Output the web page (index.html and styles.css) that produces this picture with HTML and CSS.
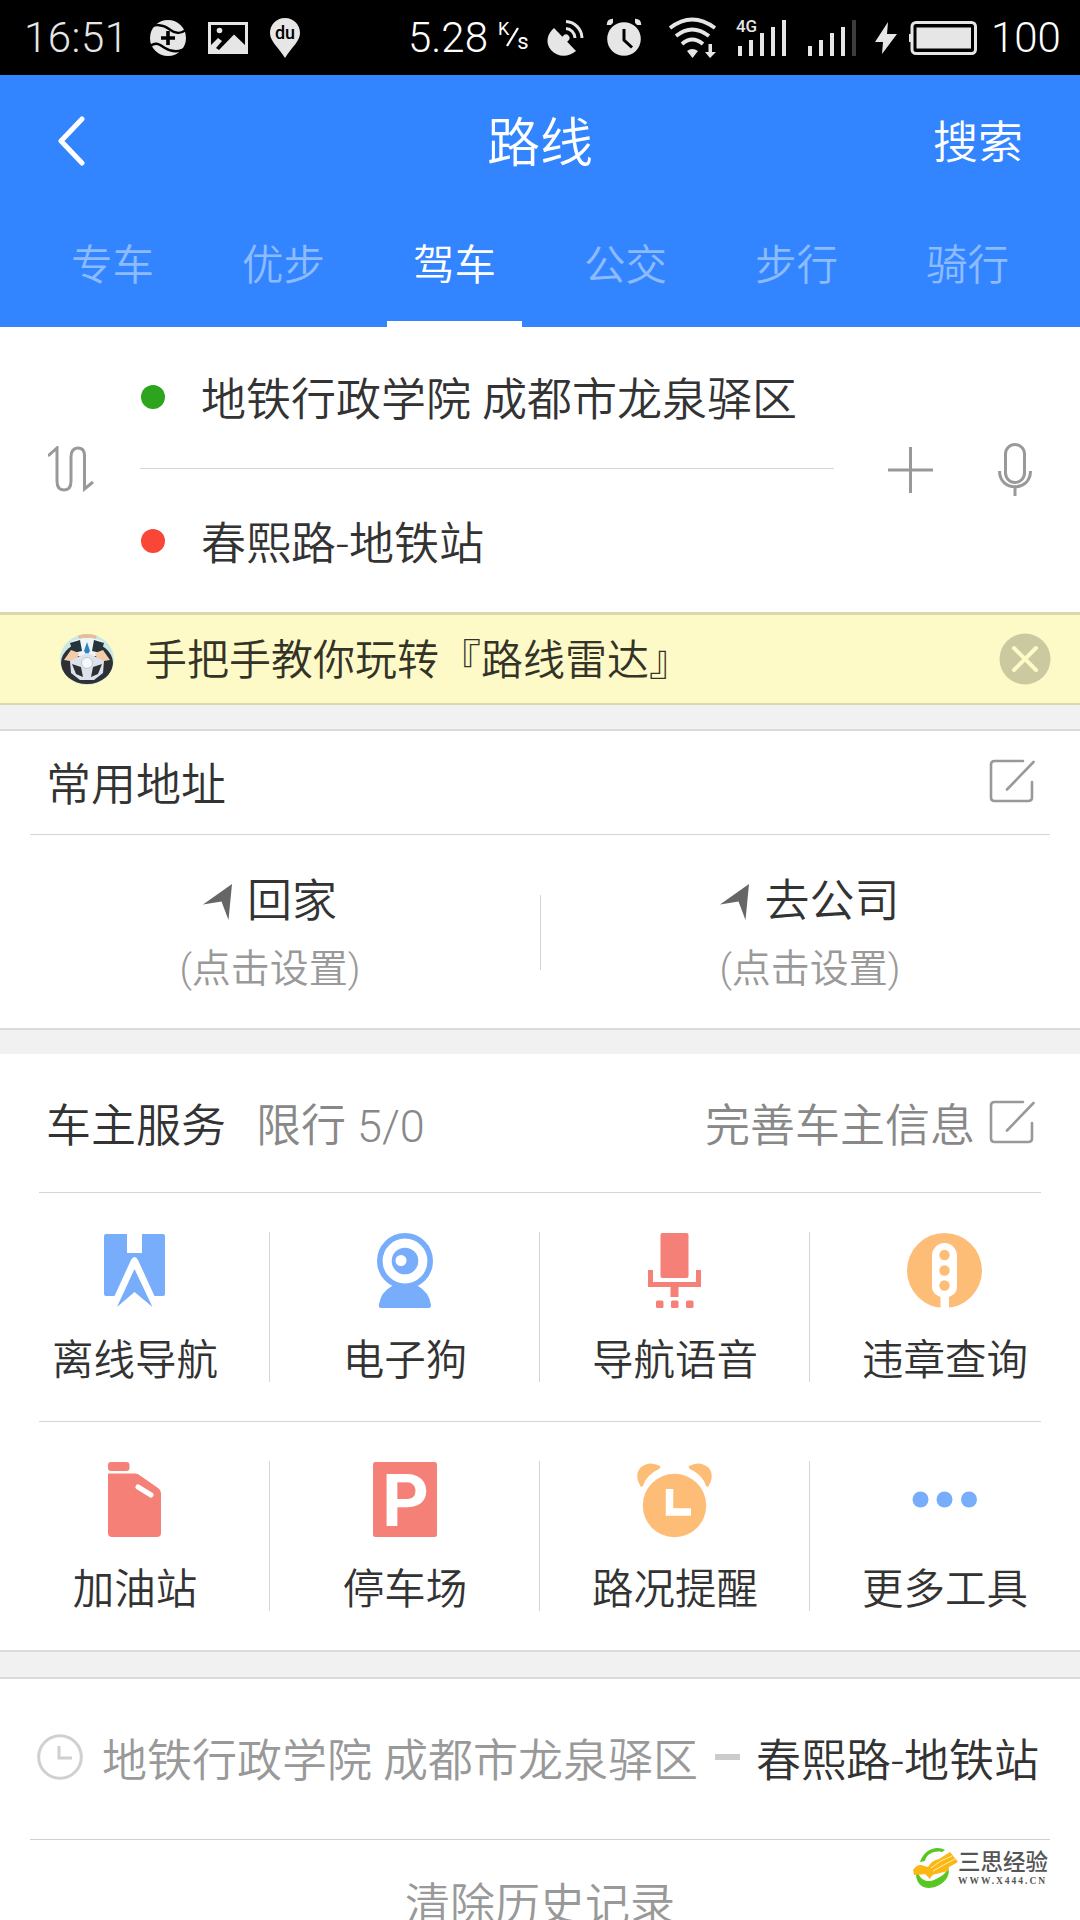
FILE: index.html
```
<!DOCTYPE html>
<html lang="zh-CN">
<head>
<meta charset="utf-8">
<title>路线</title>
<link rel="stylesheet" href="styles.css">
</head>
<body>
<svg class="defs" width="0" height="0" aria-hidden="true">
  <symbol id="edit" viewBox="0 0 46 44">
    <path d="M34 2H5.500Q2 2 2 5.500V38.500Q2 42 5.500 42H39Q43 42 43 38.500V23" />
    <path d="M18 30.500L44.500 3" />
  </symbol>
  <symbol id="arrow" viewBox="0 0 30 36">
    <path d="M29 0L25.500 36L18.500 17.500L0 20.500Z" fill="#666" />
  </symbol>
</svg>
<div class="screen">
  <div class="status">
    <span class="clock">16:51</span>
    <svg class="s-plus" viewBox="0 0 36 36">
      <circle cx="18" cy="18" r="18" fill="#e6e6e6"/>
      <path d="M-1 8.500C4 3 14 5 19 9S31 15 37 8.500M-1 27.500C5 21 9 24 15 28S30 33 37 27" fill="none" stroke="#000" stroke-width="2.400"/>
      <path d="M18 11V25M11 18H25" stroke="#000" stroke-width="3.600"/>
    </svg>
    <svg class="s-photo" viewBox="0 0 40 32">
      <path fill="#e6e6e6" fill-rule="evenodd" d="M0 0H40V32H0ZM3 3V23L10 16L14 19L8 26L11 28L26 12.500L37 23V3Z"/>
      <circle cx="11.500" cy="8.500" r="2.800" fill="#e6e6e6"/>
    </svg>
    <svg class="s-pin" viewBox="0 0 30 40">
      <path fill="#e6e6e6" d="M15 0C6 0 0 7 0 15C0 23 8 29 15 40C22 29 30 23 30 15C30 7 24 0 15 0Z"/>
      <text x="15" y="21" text-anchor="middle" class="pin-text">du</text>
    </svg>
    <span class="speed">5.28</span>
    <span class="unit"><span class="unit-k">K</span><svg viewBox="0 0 14 20"><path d="M1 19L12 1" stroke="#fff" stroke-width="2.200"/></svg><span class="unit-s">s</span></span>
    <svg class="s-dish" viewBox="0 0 36 36">
      <path fill="#e6e6e6" d="M6 8L28 31C20 38 9 37 3 30S-1 14 6 8Z"/>
      <path d="M16 20L18 18" stroke="#e6e6e6" stroke-width="7" stroke-linecap="round"/>
      <path d="M18 1.500A17 17 0 0 1 34 18M18 8.500A10 10 0 0 1 27 18" fill="none" stroke="#e6e6e6" stroke-width="3"/>
    </svg>
    <svg class="s-alarm" viewBox="0 0 34 37">
      <circle cx="17" cy="20" r="16.800" fill="#e6e6e6"/>
      <path d="M2 6Q2 2 6 2M28 2Q32 2 32 6" fill="none" stroke="#e6e6e6" stroke-width="4.500"/>
      <path d="M17 10V21L25 28.500" fill="none" stroke="#000" stroke-width="3"/>
    </svg>
    <svg class="s-wifi" viewBox="0 0 48 40">
      <path d="M1 10Q23 -7 46 10M7 18Q23 5 40 18M13 26Q23 17 34 26" fill="none" stroke="#e6e6e6" stroke-width="3.800"/>
      <path fill="#e6e6e6" d="M18 33Q23 29 29 33L23.500 40ZM39.500 26H43V34H47L41 40L36 34H39.500Z"/>
    </svg>
    <svg class="s-signal" viewBox="0 0 50 38">
      <text x="-2" y="13" class="net" textLength="21">4G</text>
      <path d="M2 27V37M13 21V37M24 14V37M35 8V37M46 1V37" stroke="#e6e6e6" stroke-width="4"/>
    </svg>
    <svg class="s-signal2" viewBox="0 0 50 38">
      <path d="M2 27V37M13 21V37M24 14V37M35 8V37" stroke="#e6e6e6" stroke-width="4"/>
      <path d="M46 1V37" stroke="#3c3c3c" stroke-width="4"/>
    </svg>
    <svg class="s-bolt" viewBox="0 0 22 32"><path fill="#e6e6e6" d="M13 0L0 20H8L7 32L22 12H12Z"/></svg>
    <svg class="s-battery" viewBox="0 0 68 34">
      <rect x="3" y="1.500" width="63.500" height="31" rx="4" fill="none" stroke="#e6e6e6" stroke-width="3"/>
      <rect x="7.500" y="6.500" width="54.500" height="21" fill="#e6e6e6"/>
      <rect y="13" width="3" height="8" fill="#e6e6e6"/>
    </svg>
    <span class="percent">100</span>
  </div>

  <header class="header">
    <div class="titlebar">
      <svg class="back" viewBox="0 0 28 50"><path d="M25 3L4 25L25 47" fill="none" stroke="#fff" stroke-width="5" stroke-linecap="round" stroke-linejoin="round"/></svg>
      <h1 class="title">路线</h1>
      <span class="search">搜索</span>
    </div>
    <nav class="tabs">
      <span class="tab">专车</span>
      <span class="tab">优步</span>
      <span class="tab active">驾车</span>
      <span class="tab">公交</span>
      <span class="tab">步行</span>
      <span class="tab">骑行</span>
    </nav>
  </header>

  <section class="route">
    <svg class="swap" viewBox="0 0 46 46"><path d="M0 10L9 2V35Q9 44 16 44T23 35V11Q23 2 30 2T36.500 11V43L45 36" fill="none" stroke="#999" stroke-width="3"/></svg>
    <div class="points">
      <div class="point"><i class="dot green"></i>地铁行政学院 成都市龙泉驿区</div>
      <div class="point last"><i class="dot red"></i>春熙路-地铁站</div>
    </div>
    <svg class="plus" viewBox="0 0 45 46"><path d="M22.500 0V46M0 23H45" stroke="#999" stroke-width="3"/></svg>
    <svg class="mic" viewBox="0 0 34 53"><rect x="7.500" y="1.500" width="19" height="38" rx="9.500"/><path d="M1.500 28C1.500 49 32.500 49 32.500 28M17 44V53"/></svg>
  </section>

  <section class="banner">
    <svg class="wheel" viewBox="0 0 54 51">
      <defs><clipPath id="wheel-clip"><ellipse cx="27" cy="25.500" rx="27" ry="25.500"/></clipPath></defs>
      <g clip-path="url(#wheel-clip)">
        <rect width="54" height="51" fill="#c9e9e4"/>
        <path d="M17 0H38L35 6H20Z" fill="#e5bd98"/>
        <ellipse cx="27" cy="29" rx="26" ry="21" fill="#2e3134"/>
        <path d="M12 7L23 4H32L43 7L36 22H18Z" fill="#eef5f8"/>
        <path d="M10 9L20 6L22 17L13 19ZM44 9L34 6L32 17L41 19Z" fill="#26343b"/>
        <path d="M24 17L27 8L30 17L28 20H26Z" fill="#2785c5"/>
        <path d="M4 26L11 16L19 19L16 28ZM50 26L43 16L35 19L38 28Z" fill="#f1cda9"/>
        <path d="M10 27L20 22L27 19L34 22L44 27L43 39L34 46H20L11 39Z" fill="#dce1eb"/>
        <path d="M12 30L21 33L23 43L16 40ZM42 30L33 33L31 43L38 40Z" fill="#2e3134"/>
        <circle cx="27" cy="29" r="5.500" fill="#f6f7fa" stroke="#bdc5d2"/>
      </g>
    </svg>
    <span class="banner-text">手把手教你玩转『路线雷达』</span>
    <svg class="close" viewBox="0 0 52 52"><circle cx="26" cy="26" r="25.500" fill="#cbc9a0"/><path d="M15 15L37 37M37 15L15 37" stroke="#fefac8" stroke-width="4" stroke-linecap="round"/></svg>
  </section>
  <div class="gap"></div>

  <section class="common">
    <div class="common-head"><span>常用地址</span><svg class="edit"><use href="#edit"/></svg></div>
    <div class="places">
      <div class="place">
        <div class="place-name"><svg class="arrow"><use href="#arrow"/></svg>回家</div>
        <div class="place-hint">(点击设置)</div>
      </div>
      <div class="place">
        <div class="place-name"><svg class="arrow"><use href="#arrow"/></svg>去公司</div>
        <div class="place-hint">(点击设置)</div>
      </div>
    </div>
  </section>
  <div class="gap"></div>

  <section class="service">
    <div class="service-head">
      <span>车主服务</span><span class="limit">限行 5/0</span>
      <span class="complete">完善车主信息</span><svg class="edit"><use href="#edit"/></svg>
    </div>
    <div class="tools">
      <div class="tool">
        <svg viewBox="0 0 76 76"><path fill="#78adfb" d="M9 1H30V20H45V1H66Q68 1 68 3V61Q68 63 66 63H57.500L41 27Q37.500 21 34 27L17.500 63H9Q7 63 7 61V3Q7 1 9 1ZM37.500 36L55.500 74L37.500 59L20 74Z"/></svg>
        <span>离线导航</span>
      </div>
      <div class="tool">
        <svg viewBox="0 0 76 76"><path fill="#78adfb" d="M25 53H51Q62 59 64 72Q64 75 62 75H14Q11 75 12 71Q14 59 25 53Z"/><circle cx="38" cy="28" r="25.200" fill="#fff" stroke="#78adfb" stroke-width="5.600"/><circle cx="38" cy="28" r="13.300" fill="#78adfb"/><circle cx="34" cy="27.500" r="5.500" fill="#fff"/></svg>
        <span>电子狗</span>
      </div>
      <div class="tool">
        <svg viewBox="0 0 76 76"><g fill="#f58077"><rect x="23.500" width="28" height="45" rx="2"/><path d="M11 37H16V49H59V37H64V54H41.500V64H33.500V54H11Z"/><rect x="19" y="67.500" width="7.500" height="7.500" rx="1.500"/><rect x="34" y="67.500" width="7.500" height="7.500" rx="1.500"/><rect x="49" y="67.500" width="7.500" height="7.500" rx="1.500"/></g></svg>
        <span>导航语音</span>
      </div>
      <div class="tool">
        <svg viewBox="0 0 76 76"><circle cx="37.500" cy="37.500" r="37.500" fill="#fdbd76"/><path fill="#fff" d="M25 22.500A12.500 12.500 0 0 1 50 22.500V54Q50 61 42 64V76H33.500V64Q25 61 25 54Z"/><g fill="#fdbd76"><circle cx="37.500" cy="22" r="5.200"/><circle cx="37.500" cy="37.500" r="5.200"/><circle cx="37.500" cy="52.500" r="5.200"/></g></svg>
        <span>违章查询</span>
      </div>
    </div>
    <div class="tools">
      <div class="tool">
        <svg viewBox="0 0 76 76"><rect x="11" width="21.500" height="9" rx="3" fill="#f58077"/><path fill="#f58077" d="M11 11.500H38Q41 11.500 43 13.500L61 26Q64 28 64 32V71Q64 75 60 75H15Q11 75 11 71Z"/><path d="M41 25L54 33" stroke="#fff" stroke-width="5" stroke-linecap="round"/></svg>
        <span>加油站</span>
      </div>
      <div class="tool">
        <svg viewBox="0 0 76 76"><rect x="6" width="64" height="75" rx="2.500" fill="#f58077"/><text x="15" y="64" class="park" textLength="47" lengthAdjust="spacingAndGlyphs">P</text></svg>
        <span>停车场</span>
      </div>
      <div class="tool">
        <svg viewBox="0 0 76 76"><g fill="#fdbd76"><circle cx="37.500" cy="43.500" r="31.700"/><path d="M4 25Q-3 14 3 6Q12 -2 23 4Q24 5 22 7Q9 13 6 24ZM71 25Q78 14 72 6Q63 -2 52 4Q51 5 53 7Q66 13 69 24Z"/></g><path d="M32.500 27V50H54" fill="none" stroke="#fff" stroke-width="7.500"/></svg>
        <span>路况提醒</span>
      </div>
      <div class="tool">
        <svg viewBox="0 0 76 76"><g fill="#78adfb"><circle cx="13.500" cy="37.500" r="8"/><circle cx="37.500" cy="37.500" r="8"/><circle cx="62" cy="37.500" r="8"/></g></svg>
        <span>更多工具</span>
      </div>
    </div>
  </section>
  <div class="gap tall"></div>

  <section class="history">
    <div class="record">
      <svg class="past" viewBox="0 0 46 46"><circle cx="23" cy="23" r="21.300"/><path d="M22 12V24H35"/></svg>
      <span class="from">地铁行政学院 成都市龙泉驿区</span>
      <i class="dash"></i>
      <span class="to">春熙路-地铁站</span>
    </div>
    <div class="rule"></div>
    <div class="clear">清除历史记录</div>
  </section>

  <div class="mark">
    <svg viewBox="0 0 48 42">
      <path d="M8 15C12 2 25 -2 33 3L30 5C21 3 14 8 13 14ZM6 26C10 36 19 35 24 32C31 29 35 25 36 20C40 31 28 41 17 41C9 41 4 35 4 27Z" fill="#59c722"/>
      <path d="M1 23Q6 16 12 19L16 20Q20 13 27 12L38 5L46 15L37 20L36 24L24 27Q20 27 18 32L13 27Q8 28 2 28Z" fill="#fdb714"/>
      <path d="M19 21Q28 13 40 9M21 24Q31 18 43 12" stroke="#fff1a8" stroke-width="1" fill="none"/>
    </svg>
    <div class="mark-name">三思经验<div class="mark-url">WWW.X444.CN</div></div>
  </div>
</div>
</body>
</html>
```
FILE: styles.css
```
* { box-sizing: border-box; }
html, body { margin: 0; overflow: hidden; }
body {
  width: 1080px;
  height: 1920px;
  background: #fff;
  color: #333;
  font-family: Roboto, "Noto Sans CJK SC", sans-serif;
  font-weight: 350;
  font-size: 45px;
}
svg { display: block; flex: none; }
span { white-space: nowrap; }
.defs { position: absolute; }
.screen {
  position: relative;
  width: 1080px;
  height: 1920px;
  overflow: hidden;
  display: flex;
  flex-direction: column;
}
.screen > * { flex: none; }
.gap { height: 24px; background: #f1f1f1; }
.gap.tall { height: 25px; }

/* status bar */
.status {
  height: 75px;
  background: #000;
  color: #e6e6e6;
  display: flex;
  align-items: center;
  font-size: 42px;
  font-weight: 300;
  line-height: 75px;
}
.status svg { overflow: visible; }
.clock { width: 126px; padding-left: 24px; margin-right: 24px; letter-spacing: 0.5px; }
.s-plus { width: 36px; height: 36px; }
.s-photo { width: 40px; height: 32px; margin-left: 22px; }
.s-pin { width: 30px; height: 40px; margin-left: 22px; }
.pin-text { font: 500 18px Roboto, sans-serif; fill: #000; }
.speed { width: 82px; margin-left: 108px; color: #fff; }
.unit {
  display: flex;
  width: 31px;
  height: 36px;
  margin-left: 8px;
  font-weight: 400;
  color: #fff;
}
.unit svg { width: 14px; height: 20px; margin: 7px -3px 0; }
.unit-k { font-size: 18px; line-height: 18px; }
.unit-s { font-size: 22px; line-height: 44px; }
.s-dish { width: 36px; height: 36px; margin-left: 19px; }
.s-alarm { width: 34px; height: 37px; margin-left: 23px; }
.s-wifi { width: 48px; height: 40px; margin-left: 28px; }
.s-signal { width: 50px; height: 38px; margin-left: 21px; }
.s-signal2 { width: 50px; height: 38px; margin-left: 20px; }
.net { font: 500 17px Roboto, sans-serif; fill: #e6e6e6; }
.s-bolt { width: 22px; height: 32px; margin-left: 17px; }
.s-battery { width: 68px; height: 34px; margin-left: 12px; }
.percent { margin-left: 14px; color: #fff; }

/* header */
.header { height: 252px; background: #3385ff; color: #fff; }
.titlebar {
  height: 132px;
  display: grid;
  grid-template-columns: 1fr auto 1fr;
  align-items: center;
  padding: 0 57px;
}
.back { width: 28px; height: 50px; }
.title { margin: 0; padding-top: 5px; font-size: 53px; font-weight: inherit; line-height: 60px; }
.search { justify-self: end; padding-top: 5px; font-size: 45px; line-height: 60px; }
.tabs { height: 120px; padding: 0 27px; display: flex; }
.tab {
  flex: 1;
  display: flex;
  flex-direction: column;
  align-items: center;
  font-size: 41.500px;
  line-height: 118px;
  color: #8dbbff;
}
.tab.active { color: #fff; }
.tab.active::after { content: ""; width: 135px; height: 6px; margin-top: -4px; background: #fff; }

/* route input */
.route { height: 285px; display: flex; align-items: center; padding: 0 48px; }
.swap { width: 46px; height: 46px; margin-top: -2px; }
.points { width: 694px; height: 285px; margin-left: 46px; }
.point {
  display: flex;
  align-items: center;
  height: 142px;
  padding-bottom: 2px;
  border-bottom: 1px solid #d5d5d5;
}
.point.last { height: 143px; padding-bottom: 0; border: 0; }
.dot { width: 24px; height: 24px; border-radius: 50%; margin: 0 36px 0 1px; }
.green { background: #2ca41d; }
.red { background: #fa4637; }
.plus { width: 45px; height: 46px; margin-left: 54px; }
.mic { width: 34px; height: 53px; margin-left: 65px; fill: none; stroke: #999; stroke-width: 3; }

/* tip banner */
.banner {
  height: 93px;
  background: #fefac8;
  border: solid #dbd8ac;
  border-width: 3px 0 2px;
  display: flex;
  align-items: center;
  padding: 0 29px 0 60px;
}
.wheel { width: 54px; height: 51px; }
.banner-text { margin-left: 31px; padding-bottom: 5px; font-size: 42px; color: #333328; }
.close { width: 52px; height: 52px; margin-left: auto; }

/* common addresses */
.common {
  height: 301px;
  border-top: 2px solid #dadada;
  border-bottom: 2px solid #dadada;
}
.common-head {
  height: 104px;
  margin: 0 30px;
  padding: 0 15px 3px 16px;
  border-bottom: 1px solid #d5d5d5;
  display: flex;
  align-items: center;
  justify-content: space-between;
}
.edit { width: 46px; height: 44px; fill: none; stroke: #999; stroke-width: 2.600; stroke-linecap: round; }
.places { height: 193px; display: flex; }
.place { flex: 1; padding-top: 37px; text-align: center; }
.place + .place { background: linear-gradient(#d5d5d5, #d5d5d5) 0 60px / 1px 75px no-repeat; }
.place-name { display: flex; justify-content: center; align-items: center; height: 60px; line-height: 62px; }
.arrow { width: 30px; height: 36px; margin-right: 14px; }
.place-hint { font-size: 39px; line-height: 50px; margin-top: 12px; color: #999; }

/* car owner services */
.service { height: 598px; border-bottom: 2px solid #dadada; }
.service-head {
  height: 138px;
  margin: 0 39px;
  padding: 0 6px 2px 7px;
  display: flex;
  align-items: center;
}
.limit { margin-left: 30px; color: #888; }
.complete { margin-left: auto; margin-right: 14px; color: #888; }
.tools {
  height: 229px;
  display: grid;
  grid-template-columns: repeat(4, 270px);
  background: linear-gradient(#d5d5d5, #d5d5d5) 39px 0 / 1002px 1px no-repeat;
}
.tool {
  display: flex;
  flex-direction: column;
  align-items: center;
  padding-top: 41px;
  font-size: 41.500px;
  line-height: 60px;
  background: linear-gradient(#d5d5d5, #d5d5d5) 100% 40px / 1px 150px no-repeat;
}
.tool:last-child { background: none; }
.tool svg { width: 76px; height: 76px; }
.tool span { margin-top: 22px; }
.park { font: 700 72px Roboto, sans-serif; fill: #fff; }

/* history */
.record {
  height: 162px;
  padding: 0 0 4px 37px;
  border-top: 2px solid #dadada;
  display: flex;
  align-items: center;
}
.past { width: 46px; height: 46px; fill: none; stroke: #cfd0d2; stroke-width: 3; }
.from { width: 593px; margin-left: 19px; color: #999; }
.dash { width: 25px; height: 6px; margin-left: 20px; background: #ccc; }
.to { margin-left: 16px; }
.rule { height: 1px; margin: 0 30px; background: #d0d0d0; }
.clear { padding-top: 36px; line-height: 60px; text-align: center; color: #999; }

/* site mark over the page corner */
.mark { position: absolute; left: 912px; top: 1847px; display: flex; }
.mark svg { width: 48px; height: 42px; }
.mark-name { margin-left: -2px; padding-top: 1px; font-size: 22.500px; font-weight: 500; line-height: 29px; color: #555; }
.mark-url { font: bold 9.500px/9px "Liberation Serif", serif; letter-spacing: 2px; }
```
